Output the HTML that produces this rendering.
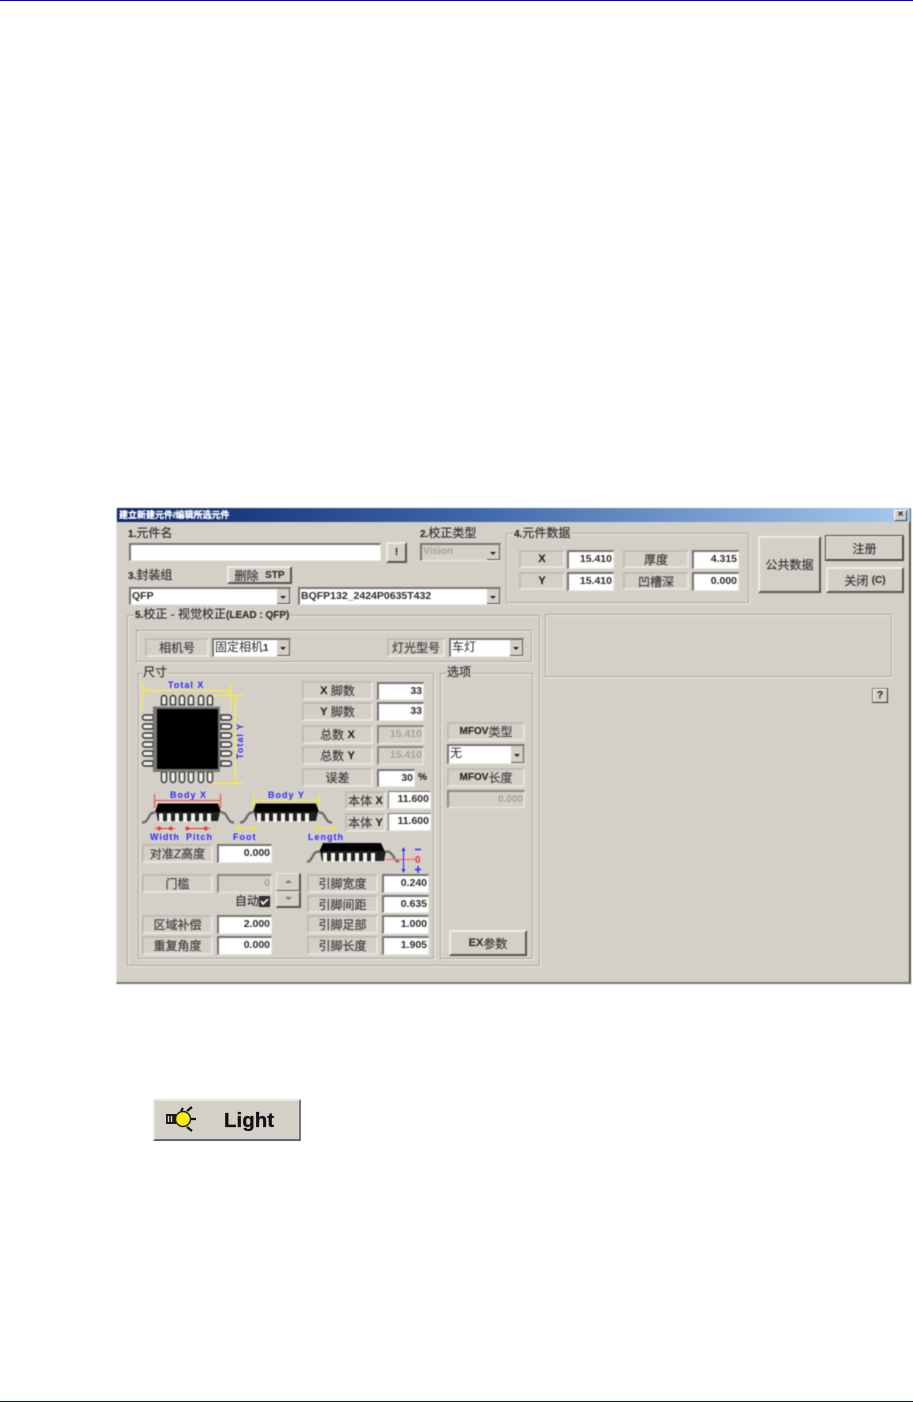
<!DOCTYPE html>
<html lang="zh">
<head>
<meta charset="utf-8">
<title>建立新建元件</title>
<style>
html,body{margin:0;padding:0;background:#fff}
body{position:relative;width:913px;height:1402px;overflow:hidden;font-family:"Liberation Sans","WenQuanYi Zen Hei","Noto Sans CJK SC",sans-serif}
div{position:absolute;box-sizing:border-box}
#w{left:116px;top:508px;width:795px;height:476px;background:#d4d0c8;border-right:2px solid #55534e;border-bottom:2px solid #77756f;border-left:1px solid #e8e6e0;filter:blur(.45px)}
#w>*{margin-left:-117px;margin-top:-508px}
#w svg{position:absolute;left:0;top:0;width:913px;height:1402px}
.t{left:117px;top:508px;width:793px;height:14px;background:linear-gradient(90deg,#0a246a,#3f68a8 45%,#a6caf0);color:#fff;font-size:9px;font-weight:bold;line-height:14px;padding-left:2px;white-space:nowrap;-webkit-text-stroke:.3px #fff}
.x{left:894px;top:510px;width:13px;height:11px;background:#d4d0c8;border:1px solid;border-color:#fff #444 #444 #fff;font:bold 10px/8px "Liberation Sans",sans-serif;text-align:center;color:#222}
.g{border:1px solid #a9a69f;box-shadow:1px 1px 0 #eeece7,inset 1px 1px 0 #eeece7}
.n{font-size:12px;line-height:14px;color:#2e2e2e;background:#d4d0c8;white-space:nowrap;padding:0 1px;-webkit-text-stroke:.15px #2e2e2e}
.n b{font-size:10px}
.l{background:#d4d0c8;border:2px solid;border-color:#c0bcb4 #e6e4de #e6e4de #c0bcb4;color:#3a3a3a;font-size:12px;text-align:center;white-space:nowrap;display:flex;align-items:center;justify-content:center;-webkit-text-stroke:.15px #3a3a3a}
.l b{font-size:11px;color:#222}
.i{background:#fff;border-style:solid;border-width:2px 1px 1px 2px;border-color:#77756f #ecebe6 #ecebe6 #77756f;text-align:right;font-size:10.5px;font-weight:bold;color:#2c2c2c;padding-right:1px;white-space:nowrap;line-height:15px}
.d{background:#d4d0c8;color:#a5a29b;border-color:#8b8983 #ecebe6 #ecebe6 #8b8983}
.c{background:#fff;border-style:solid;border-width:2px 1px 1px 2px;border-color:#77756f #d8d5ce #eee #77756f;font-size:10.5px;font-weight:bold;color:#2c2c2c;line-height:14px;padding-left:1px;white-space:nowrap;overflow:hidden}
.c:after{content:"";position:absolute;right:0;top:0;bottom:0;width:13px;background:#d4d0c8;border-right:1px solid #555;border-bottom:1px solid #555;box-sizing:border-box}
.c:before{content:"";position:absolute;z-index:1;right:4px;top:50%;margin-top:-1px;border:3px solid transparent;border-top:3px solid #222;border-bottom:0}
.c.o{background:#d4d0c8;color:#a5a29b}
.b{background:#d4d0c8;border:2px solid;border-color:#eeece7 #55534e #55534e #eeece7;color:#333;font-size:12px;display:flex;align-items:center;justify-content:center;white-space:nowrap;-webkit-text-stroke:.15px #333}
.b b{font-size:10px}
.f{font-weight:bold;font-size:9px;letter-spacing:1px;fill:#2a2aff;font-family:"Liberation Sans",sans-serif}
#light{left:153px;top:1099px;width:148px;height:42px;background:#d4d0c8;border:2px solid;border-color:#e8e6e0 #77756f #666 #e8e6e0;filter:blur(.35px)}
</style>
</head>
<body>
<div style="left:0;top:0;width:913px;height:1px;background:#0000ee"></div>
<div style="left:0;top:1401px;width:913px;height:1px;background:#0000cc"></div>

<div id="w">
<div class="t">建立新建元件/编辑所选元件</div>
<div class="x">×</div>

<div class="n" style="left:127px;top:526px;background:none"><b>1.</b>元件名</div>
<div class="i" style="left:129px;top:543px;width:252px;height:18px"></div>
<div class="b" style="left:386px;top:542px;width:21px;height:21px"><b>!</b></div>
<div class="n" style="left:419px;top:526px;background:none"><b>2.</b>校正类型</div>
<div class="c o" style="left:420px;top:543px;width:81px;height:18px;font-size:10px">Vision</div>
<div class="n" style="left:127px;top:568px;background:none"><b>3.</b>封装组</div>
<div class="b" style="left:227px;top:566px;width:65px;height:18px">删除&nbsp;&nbsp;<b>STP</b></div>
<div class="c" style="left:129px;top:587px;width:162px;height:18px">QFP</div>
<div class="c" style="left:298px;top:587px;width:203px;height:18px">BQFP132_2424P0635T432</div>

<div class="g" style="left:506px;top:533px;width:243px;height:70px"></div>
<div class="n" style="left:513px;top:526px"><b>4.</b>元件数据</div>
<div class="l" style="left:519px;top:550px;width:46px;height:18px"><b>X</b></div>
<div class="i" style="left:567px;top:550px;width:47px;height:19px">15.410</div>
<div class="l" style="left:623px;top:550px;width:66px;height:18px">厚度</div>
<div class="i" style="left:692px;top:550px;width:47px;height:19px">4.315</div>
<div class="l" style="left:519px;top:572px;width:46px;height:18px"><b>Y</b></div>
<div class="i" style="left:567px;top:572px;width:47px;height:19px">15.410</div>
<div class="l" style="left:623px;top:572px;width:66px;height:18px">凹槽深</div>
<div class="i" style="left:692px;top:572px;width:47px;height:19px">0.000</div>

<div class="b" style="left:758px;top:536px;width:63px;height:57px">公共数据</div>
<div class="b" style="left:825px;top:535px;width:79px;height:26px;outline:1px solid #444;outline-offset:-1px">注册</div>
<div class="b" style="left:826px;top:567px;width:78px;height:26px">关闭&nbsp;<b>(C)</b></div>

<div class="g" style="left:127px;top:615px;width:413px;height:351px"></div>
<div class="n" style="left:134px;top:607px"><b>5.</b>校正 - 视觉校正<b>(LEAD : QFP)</b></div>
<div class="g" style="left:545px;top:614px;width:347px;height:63px"></div>
<div class="b" style="left:872px;top:688px;width:16px;height:15px;border-width:1px;border-color:#777 #333 #333 #777;box-shadow:inset 1px 1px 0 #fff"><b style="font-size:10px;color:#222">?</b></div>

<div class="g" style="left:136px;top:630px;width:396px;height:32px"></div>
<div class="l" style="left:145px;top:638px;width:64px;height:19px">相机号</div>
<div class="c" style="left:212px;top:638px;width:79px;height:19px;font-weight:normal;font-size:12px">固定相机<b style="font-size:10px">1</b></div>
<div class="l" style="left:387px;top:638px;width:58px;height:19px">灯光型号</div>
<div class="c" style="left:449px;top:638px;width:75px;height:19px;font-weight:normal;font-size:12px">车灯</div>

<div class="g" style="left:138px;top:673px;width:296px;height:286px"></div>
<div class="n" style="left:142px;top:665px">尺寸</div>
<div class="g" style="left:440px;top:673px;width:93px;height:286px"></div>
<div class="n" style="left:446px;top:665px">选项</div>

<div class="l" style="left:302px;top:681px;width:71px;height:19px"><b>X</b>&nbsp;脚数</div>
<div class="i" style="left:377px;top:682px;width:47px;height:18px">33</div>
<div class="l" style="left:302px;top:702px;width:71px;height:19px"><b>Y</b>&nbsp;脚数</div>
<div class="i" style="left:377px;top:702px;width:47px;height:19px">33</div>
<div class="l" style="left:302px;top:725px;width:71px;height:19px">总数&nbsp;<b>X</b></div>
<div class="i d" style="left:377px;top:725px;width:47px;height:19px">15.410</div>
<div class="l" style="left:302px;top:746px;width:71px;height:19px">总数&nbsp;<b>Y</b></div>
<div class="i d" style="left:377px;top:746px;width:47px;height:19px">15.410</div>
<div class="l" style="left:302px;top:768px;width:71px;height:19px">误差</div>
<div class="i" style="left:377px;top:769px;width:38px;height:18px">30</div>
<div class="n" style="left:417px;top:771px;background:none;font-weight:bold;font-size:10px">%</div>
<div class="l" style="left:345px;top:791px;width:41px;height:19px">本体&nbsp;<b>X</b></div>
<div class="i" style="left:388px;top:791px;width:43px;height:18px;border-width:1px">11.600</div>
<div class="l" style="left:345px;top:813px;width:41px;height:19px">本体&nbsp;<b>Y</b></div>
<div class="i" style="left:388px;top:813px;width:43px;height:18px;border-width:1px">11.600</div>

<div class="l" style="left:142px;top:844px;width:71px;height:19px">对准Z高度</div>
<div class="i" style="left:217px;top:844px;width:55px;height:19px">0.000</div>
<div class="l" style="left:142px;top:874px;width:71px;height:19px">门槛</div>
<div class="i d" style="left:217px;top:874px;width:55px;height:19px">0</div>
<div class="n" style="left:234px;top:894px;background:none">自动</div>
<div style="left:259px;top:896px;width:11px;height:11px;background:#333;border:1px solid #222"></div>
<div class="b" style="left:276px;top:873px;width:25px;height:18px;border-width:1px 2px 1px 1px"></div>
<div class="b" style="left:276px;top:891px;width:25px;height:17px;border-width:1px 2px 2px 1px"></div>
<div class="l" style="left:142px;top:915px;width:71px;height:19px">区域补偿</div>
<div class="i" style="left:217px;top:915px;width:55px;height:19px">2.000</div>
<div class="l" style="left:142px;top:936px;width:71px;height:19px">重复角度</div>
<div class="i" style="left:217px;top:936px;width:55px;height:19px">0.000</div>

<div class="l" style="left:307px;top:874px;width:71px;height:19px">引脚宽度</div>
<div class="i" style="left:382px;top:874px;width:47px;height:19px">0.240</div>
<div class="l" style="left:307px;top:895px;width:71px;height:18px">引脚间距</div>
<div class="i" style="left:382px;top:895px;width:47px;height:18px">0.635</div>
<div class="l" style="left:307px;top:915px;width:71px;height:19px">引脚足部</div>
<div class="i" style="left:382px;top:915px;width:47px;height:19px">1.000</div>
<div class="l" style="left:307px;top:936px;width:71px;height:19px">引脚长度</div>
<div class="i" style="left:382px;top:936px;width:47px;height:19px">1.905</div>

<div class="l" style="left:447px;top:722px;width:78px;height:19px;color:#444"><b style="font-size:10px;color:#222">MFOV</b>类型</div>
<div class="c" style="left:447px;top:744px;width:78px;height:20px;font-weight:normal;font-size:12px">无</div>
<div class="l" style="left:447px;top:768px;width:78px;height:19px;color:#444"><b style="font-size:10px;color:#222">MFOV</b>长度</div>
<div class="i d" style="left:447px;top:790px;width:78px;height:18px;font-size:10px">0.000</div>
<div class="b" style="left:449px;top:930px;width:78px;height:26px"><b style="font-size:11px">EX</b>参数</div>

<svg viewBox="0 0 913 1402" xmlns="http://www.w3.org/2000/svg" style="margin:0;left:-117px;top:-508px">
<!-- spinner arrows -->
<path d="M285 883l3.500-3 3.500 3zM285 897h7l-3.500 3z" fill="#777"/>
<path d="M261 901l2 3 5-5" fill="none" stroke="#fff" stroke-width="1.600"/>

<!-- QFP leads -->
<path d="M161.500 705v-7a2.500 2.500 0 0 1 5 0v7zM170.500 705v-7a2.500 2.500 0 0 1 5 0v7zM179.500 705v-7a2.500 2.500 0 0 1 5 0v7zM188.500 705v-7a2.500 2.500 0 0 1 5 0v7zM198.500 705v-7a2.500 2.500 0 0 1 5 0v7zM207.500 705v-7a2.500 2.500 0 0 1 5 0v7zM161.500 772v8a2.500 2.500 0 0 0 5 0v-8zM170.500 772v8a2.500 2.500 0 0 0 5 0v-8zM179.500 772v8a2.500 2.500 0 0 0 5 0v-8zM188.500 772v8a2.500 2.500 0 0 0 5 0v-8zM198.500 772v8a2.500 2.500 0 0 0 5 0v-8zM207.500 772v8a2.500 2.500 0 0 0 5 0v-8zM153 715h-8a2.500 2.500 0 0 0 0 5h8zM153 724h-8a2.500 2.500 0 0 0 0 5h8zM153 733h-8a2.500 2.500 0 0 0 0 5h8zM153 742h-8a2.500 2.500 0 0 0 0 5h8zM153 751h-8a2.500 2.500 0 0 0 0 5h8zM153 761h-8a2.500 2.500 0 0 0 0 5h8zM221 715h8a2.500 2.500 0 0 1 0 5h-8zM221 724h8a2.500 2.500 0 0 1 0 5h-8zM221 733h8a2.500 2.500 0 0 1 0 5h-8zM221 742h8a2.500 2.500 0 0 1 0 5h-8zM221 751h8a2.500 2.500 0 0 1 0 5h-8zM221 761h8a2.500 2.500 0 0 1 0 5h-8z" fill="#efeee9" stroke="#333" stroke-width="1.400"/>
<path d="M153 706h67v66h-67z" fill="#777773"/>
<path d="M153 706h67" stroke="#d8d6d0" fill="none"/>
<path d="M157 709h61v60h-61z" fill="#000"/>

<!-- Total X / Total Y -->
<path d="M142.500 683v28M230.500 683v28M142 690.500h88M213 695.500h30M213 783.500h30M235.500 695v88" stroke="#f6f04a" stroke-width="1.200" fill="none"/>
<path d="M142 690.500l4-2v4zM230 690.500l-4-2v4zM235.500 696l-2 4h4zM235.500 783l-2-4h4z" fill="#f2ea20"/>
<text class="f" x="168" y="688">Total X</text>
<text class="f" x="0" y="0" transform="translate(243 759) rotate(-90)">Total Y</text>

<!-- Body X -->
<path d="M154.500 794v14M220.500 794v14M155 800.500h66" stroke="#f05a5a" stroke-width="1.300" fill="none"/>
<text class="f" x="170" y="798">Body X</text>
<path d="M158 803.500h60l3 8.500h-66z" fill="#000"/>
<path d="M156 812h64l-2 9h-60z" fill="#222"/>
<path d="M159 813.500h4v8.500h-4zM167 813.500h4v8.500h-4zM175 813.500h4v8.500h-4zM183 813.500h4v8.500h-4zM191 813.500h4v8.500h-4zM199 813.500h4v8.500h-4zM207 813.500h4v8.500h-4z" fill="#f4f3ef"/>
<path d="M155 812.500c-5 0-5 3-7 6s-3 4-6 4M221 812.500c5 0 5 3 7 6s3 4 6 4" fill="none" stroke="#6f6d68" stroke-width="2.400"/>
<path d="M155 828.500h20M185 828.500h25" stroke="#f03030" fill="none"/>
<path d="M163 828.500l-5-2.500v5zM167 828.500l5-2.500v5zM191 828.500l-5-2.500v5zM202 828.500l5-2.500v5z" fill="#f03030"/>
<text class="f" x="150" y="840">Width</text>
<text class="f" x="186" y="840">Pitch</text>

<!-- Body Y -->
<path d="M253.500 794v14M319.500 794v14M254 800.500h66" stroke="#f4ee3a" stroke-width="1.300" fill="none"/>
<text class="f" x="268" y="798">Body Y</text>
<path d="M256 803.500h60l3 8.500h-66z" fill="#000"/>
<path d="M254 812h64l-2 9h-60z" fill="#222"/>
<path d="M257 813.500h4v8.500h-4zM265 813.500h4v8.500h-4zM273 813.500h4v8.500h-4zM281 813.500h4v8.500h-4zM289 813.500h4v8.500h-4zM297 813.500h4v8.500h-4zM305 813.500h4v8.500h-4z" fill="#f4f3ef"/>
<path d="M253 812.500c-5 0-5 3-7 6s-3 4-6 4M319 812.500c5 0 5 3 7 6s3 4 6 4" fill="none" stroke="#6f6d68" stroke-width="2.400"/>
<path d="M237 828.500h17M315 828.500h21" stroke="#f4ee3a" fill="none"/>
<path d="M242 828.500l-5-2.500v5zM250 828.500l5-2.500v5zM320 828.500l-5-2.500v5zM331 828.500l5-2.500v5z" fill="#f2ea20"/>
<text class="f" x="233" y="840">Foot</text>
<text class="f" x="308" y="840">Length</text>

<!-- Length package -->
<path d="M323 843h58l4 9h-66z" fill="#000"/>
<path d="M320 851h66l-2 10h-62z" fill="#222"/>
<path d="M323 853h4v9h-4zM331 853h4v9h-4zM339 853h4v9h-4zM347 853h4v9h-4zM355 853h4v9h-4zM363 853h4v9h-4zM371 853h4v9h-4z" fill="#f4f3ef"/>
<path d="M320 851.500c-6 0-6 3-8 6s-2 4-5 4M386 851.500c5 0 6 3 8 6s2 4 5 4" fill="none" stroke="#6f6d68" stroke-width="2.400"/>
<path d="M385 859.500h30" stroke="#f07a7a" stroke-width="1.500" fill="none"/>
<path d="M403.500 849v22" stroke="#2a2aff" fill="none"/>
<path d="M403.500 847l-2 4h4zM403.500 873l-2-4h4z" fill="#2a2aff"/>
<path d="M415 849.500h6M415 869.500h6M418 866v7" stroke="#2a2aff" stroke-width="1.500" fill="none"/>
<text x="415" y="863" font-size="10" font-weight="bold" fill="#f03030" font-family="Liberation Sans,sans-serif">0</text>
</svg>
</div>

<div id="light">
<svg width="60" height="30" viewBox="0 0 60 30" style="position:absolute;left:10px;top:3px">
<path d="M1 10h10v10H1z" fill="#1a1a1a"/>
<path d="M3.500 12v6M6.500 12v6" stroke="#ddd" stroke-width="1.300"/>
<circle cx="18" cy="15" r="7.500" fill="#ffee00" stroke="#1a1a1a" stroke-width="1.400"/>
<path d="M22 7l5-4M26 15h5M22 23l5 4M16 7l2-3" stroke="#111" stroke-width="2.200" fill="none"/>
</svg>
<span style="position:absolute;left:69px;top:6px;font:bold 20.500px/27px 'Liberation Sans',sans-serif;color:#111;-webkit-text-stroke:.3px #111">Light</span>
</div>
</body>
</html>
